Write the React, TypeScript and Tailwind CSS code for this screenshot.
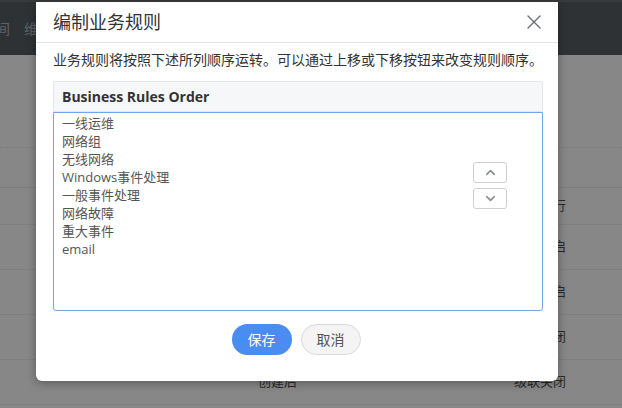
import { ChevronDown, ChevronUp, X } from 'lucide-react'

const font = { fontFamily: '"Open Sans", "Noto Sans CJK SC", sans-serif' }

const rules = ['一线运维', '网络组', '无线网络', 'Windows事件处理', '一般事件处理', '网络故障', '重大事件', 'email']

const bgRows = [
  { h: 'h-[37px]', left: '', right: '执行' },
  { h: 'h-[45px]', left: '', right: '开启' },
  { h: 'h-[45px]', left: '', right: '开启' },
  { h: 'h-[45px]', left: '', right: '关闭' },
  { h: 'h-[45px]', left: '创建后', right: '级联关闭' },
]

export default function App() {
  return (
    <div className="relative h-[408px] w-[622px] overflow-hidden bg-[#878787]" style={font}>
      {/* page behind the dim overlay */}
      <div className="flex h-[55px] items-center gap-[14px] border-t-2 border-[#3a3a3a] bg-[#2f3235] text-[14px] text-[#5d6267]">
        <span className="-ml-[4px]">间</span>
        <span>维护</span>
      </div>
      <div className="h-[93px] border-b border-dotted border-[#7a7a7a]" />
      <div className="h-[40px] border-b border-[#7c7c7c]" />
      {bgRows.map((r, i) => (
        <div key={i} className={`relative flex ${r.h} items-center border-b border-[#7f7f7f] text-[13px] text-[#2a2a2a]`}>
          <span className="absolute left-[258px]">{r.left}</span>
          <span className="absolute right-[56px]">{r.right}</span>
        </div>
      ))}

      {/* modal */}
      <div className="absolute left-[36px] top-[2px] flex h-[379px] w-[522px] flex-col rounded-b-[6px] bg-white shadow-[0_2px_10px_rgba(0,0,0,0.35)]">
        <div className="flex h-[41px] items-center justify-between border-b border-[#e3e3e3] pl-[17px] pr-[12px]">
          <span className="text-[18px] text-[#333]">编制业务规则</span>
          <X className="h-[24px] w-[24px] text-[#6b6f75]" strokeWidth={1.4} />
        </div>
        <div className="pl-[17px] pr-[15px] pt-[7px]">
          <p className="whitespace-nowrap text-[14px] leading-[20px] text-[#333]">业务规则将按照下述所列顺序运转。可以通过上移或下移按钮来改变规则顺序。</p>
          <div className="mt-[11px] flex h-[31px] items-center rounded-t-[2px] border border-[#e4e6ea] bg-[#f6f7f9] pl-[8px] text-[14px] font-bold text-[#333]">
            Business Rules Order
          </div>
          <div className="relative h-[199px] rounded-b-[3px] border border-[#74a4ee] pl-[8px] pt-[1px]">
            {rules.map((r) => (
              <div key={r} className="text-[13px] leading-[18px] text-[#555]">
                {r}
              </div>
            ))}
            <div className="absolute right-[35px] top-[49px] flex flex-col gap-[5px]">
              <button className="flex h-[21px] w-[34px] items-center justify-center rounded-[3px] border border-[#cfcfcf] bg-white">
                <ChevronUp className="h-[15px] w-[15px] text-[#8a8d91]" strokeWidth={2.5} />
              </button>
              <button className="flex h-[21px] w-[34px] items-center justify-center rounded-[3px] border border-[#cfcfcf] bg-white">
                <ChevronDown className="h-[15px] w-[15px] text-[#8a8d91]" strokeWidth={2.5} />
              </button>
            </div>
          </div>
          <div className="mt-[13px] flex justify-center gap-[9px] pr-[4px]">
            <button className="h-[31px] w-[60px] rounded-full bg-[#4a8cef] text-[14px] text-white">保存</button>
            <button className="h-[31px] w-[60px] rounded-full border border-[#dadada] bg-[#f4f4f4] text-[14px] text-[#555]">取消</button>
          </div>
        </div>
      </div>
    </div>
  )
}
